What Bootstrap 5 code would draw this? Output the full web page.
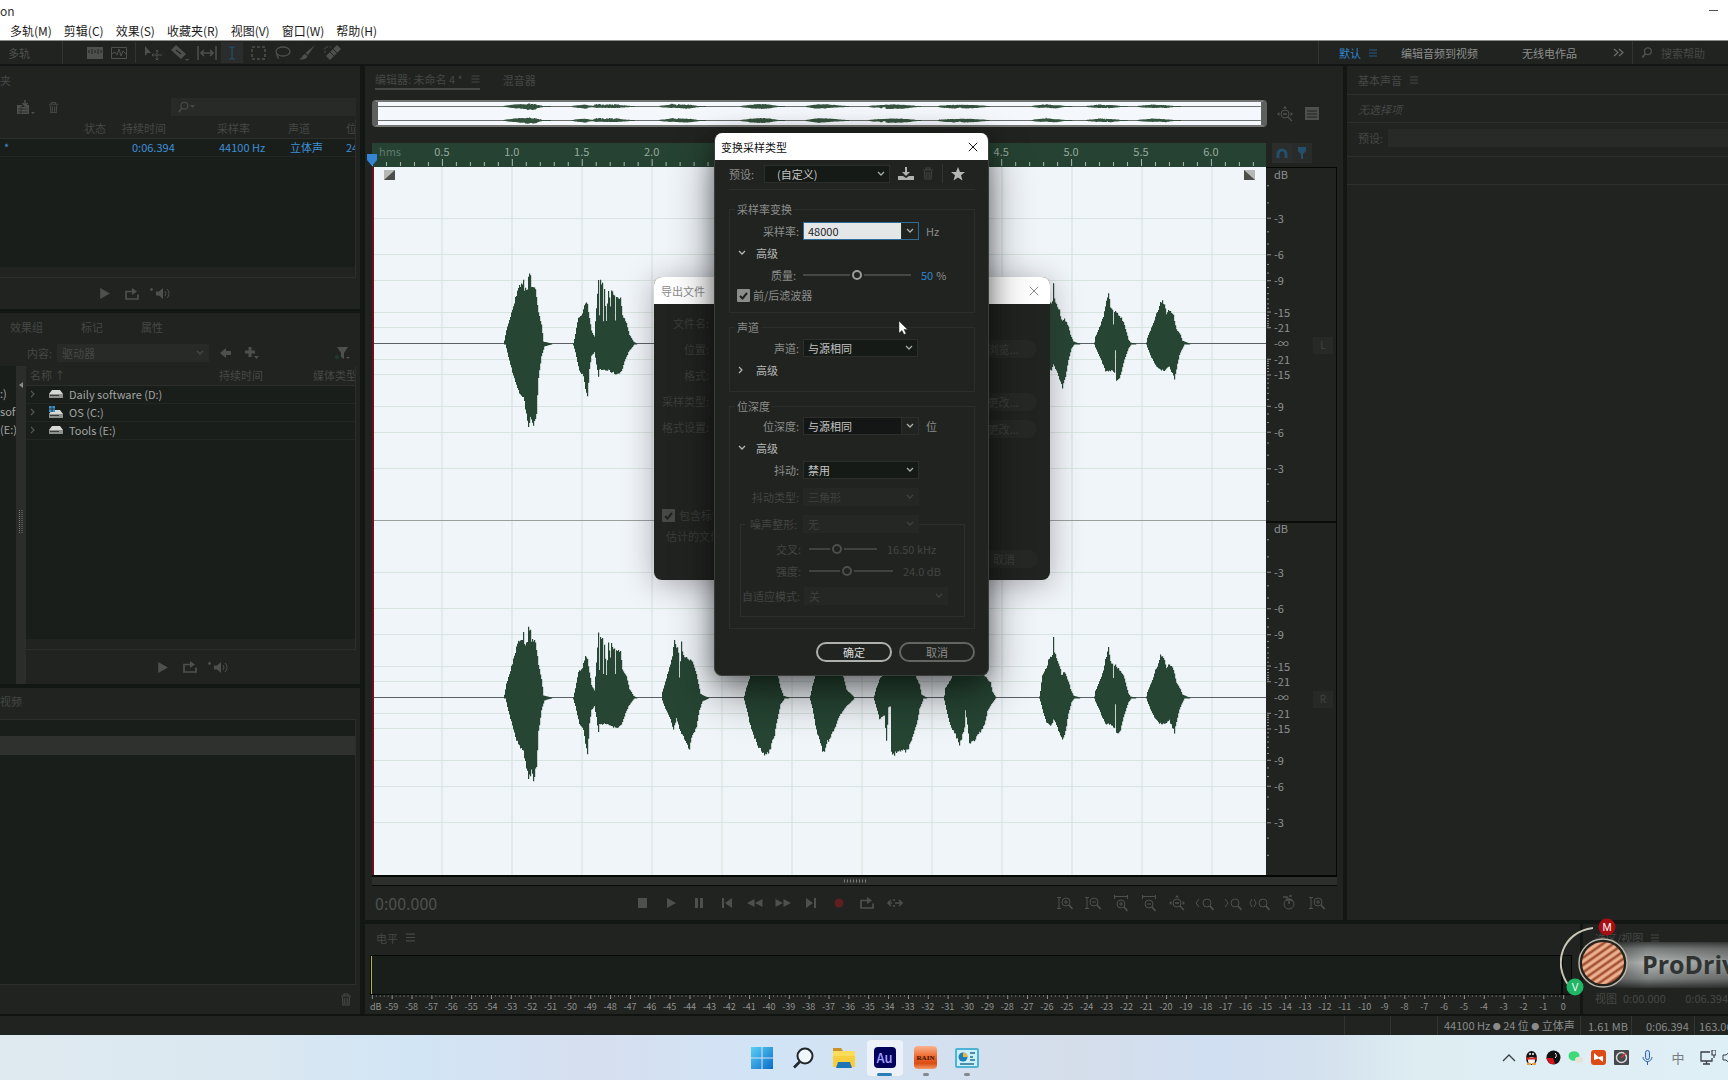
<!DOCTYPE html>
<html lang="zh-CN">
<head>
<meta charset="utf-8">
<meta name="viewport" content="width=device-width, initial-scale=1">
<title>Audition</title>
<link href="https://cdn.jsdelivr.net/npm/bootstrap@5.3.0/dist/css/bootstrap.min.css" rel="stylesheet">
<style>
:root{--panel:#212321;--well:#1a1e1b;--gap:#131714;--line:#2b2e2b;--dim:#454845;--ico:#4d504d;--blue:#3d8fd6}
body{font-family:"Noto Sans CJK SC","Noto Sans",sans-serif;font-size:11px;line-height:16px;color:var(--dim);background:var(--gap);height:100vh;overflow:hidden}
svg{display:block;flex:none}
.ib{border:0;background:none;padding:0;color:inherit;display:inline-flex;align-items:center;justify-content:center;flex:none;line-height:16px}
.titlebar{height:21px;background:#fff;color:#333;font-size:12px}
.menubar{height:20px;background:#fff;color:#111;font-size:12px;border-bottom:1px solid #8b8b8b;padding-left:10px;gap:12px}
.menubar .ib{color:#1b1b1b}
.toolbar-strip{height:25px;background:var(--panel);border-bottom:2px solid #121513;color:var(--ico)}
.vrule{width:1px;align-self:stretch;background:#323532;flex:none}
.panel{background:var(--panel);min-width:0}
.well{background:var(--well);border:1px solid var(--line);border-left:0;min-width:0}
.black-line{border:1px solid #060806}
.leftcol{width:360px;gap:4px}
.workarea{gap:4px;margin-left:5px;min-width:0}
.filespanel{height:243px}
.mediapanel{height:371px}
.fieldbox{background:#282a28;border:0;color:var(--dim);height:18px;font-size:11px;line-height:16px;padding:0 6px;border-radius:0}
.dtable{width:100%;table-layout:fixed;border-collapse:collapse;white-space:nowrap}
.dtable th,.dtable td{font-weight:400;padding:0 0 0 4px;overflow:hidden;height:18px;line-height:17px}
.dtable td{color:#a3a5a3;border-bottom:1px solid #232623}
.dtable .bluerow td{color:var(--blue)}
.dtable thead th{height:19px;border-bottom:1px solid var(--line)}
.chev{color:#555;margin-right:13px}
.drive{margin-right:6px}
.rows18{height:18px;line-height:17px;color:#a3a5a3}
.split{width:10px;background:#2a2d2a}
.strip{height:10px;background:var(--panel)}
.ctl{gap:14px}
.tab-active{border-bottom:2px solid #454845}
.overview{height:27px;border:2px solid #737673;border-left:6px solid #5d605d;border-right:6px solid #5d605d;border-radius:4px;background:#f4f7fb}
.ruler{height:24px;background:#264232}
.wave{background:#f0f5f9;border-left:2px solid #6d0f1c}
.sidecol{width:71px}
.dbcol{border-right:1px solid #060806}
.zoombar{height:11px;background:#2c2f2c;border-top:2px solid #050705;border-bottom:1px solid #090b09}
.transport{height:34px}
.transport .ib,.cell28{width:28px;height:24px}
.time-display{font-size:16px;width:270px}
.esspanel{width:381px}
.botrow{height:90px;gap:3px}
.selview{width:145px}
.statusbar{height:21px;background:var(--panel);border-top:2px solid #101310;color:#8a8c8a}
.dot8{font-size:8px}
.taskbar{height:45px;background:linear-gradient(90deg,#dfeaf0 0,#dbe8f1 14%,#d2e5f5 24%,#d6dff0 34%,#d1e4f6 45%,#d5ddea 62%,#d0dff2 70%,#d3e0ee 76%,#deedf2 82%,#dfeff6 100%)}
.task{width:36px;height:36px;border-radius:4px;position:relative}
.task.on{background:#edf2f9}
.task i{position:absolute;bottom:0;width:6px;height:3px;border-radius:2px;background:#84898f}
.task.on i{width:15px;background:#2c7fb5}
.orange-tile{font-family:"Liberation Serif",serif;font-weight:700;font-size:7px;color:#3a1206;width:23px;height:23px;border-radius:4px;background:linear-gradient(#f9b48f,#ef6a2e 45%,#d94c12 75%,#f49a68);display:flex;align-items:center;justify-content:center}
.au-tile{width:22px;height:21px;border-radius:4px;background:#00005b;color:#a6a0ff;font-size:13px;font-weight:500;display:flex;align-items:center;justify-content:center}
.tray .ib{color:#3a3f44}
/* dialogs */
.dlg{position:absolute;background:var(--panel);border-radius:8px;overflow:hidden}
.dlg-head{height:27px;background:#fff;font-size:11px}
.dlg-export{left:654px;top:277px;width:396px;height:303px;color:#3a3d3a;box-shadow:0 4px 30px rgba(40,30,40,.35)}
.dlg-export .dlg-head{color:#8b8b8b}
.dlg-export .lab{width:55px;height:26px;line-height:26px;text-align:right;white-space:nowrap}
.pill{border:0;border-radius:9px;height:18px;width:68px;background:#262826;color:#3d403d;padding:0;line-height:16px}
.dlg-conv{left:714px;top:133px;width:275px;color:#8b8d8b;border:1px solid #3a3d3a;border-top:0;box-shadow:0 18px 44px rgba(0,0,0,.48),0 2px 20px rgba(0,0,0,.3)}
.dlg-conv .dlg-head{color:#111;margin:0 -1px}
.preset{height:30px;padding-bottom:2px;border-bottom:1px solid #2c2f2c}
.grp{border:1px solid #2b2e2b;padding:0;margin:6px 0 0;min-width:0}
.grp>legend{float:none;width:auto;font-size:11px;line-height:16px;margin:0 0 0 5px;padding:0 2px}
.r22{height:22px}
.lab70{width:69px;text-align:right;white-space:nowrap;flex:none}
.unit{padding-left:7px}
.sel{appearance:none;width:116px;height:18px;border:1px solid #2b2e2b;border-radius:0;background:#161a17 url("data:image/svg+xml,%3Csvg xmlns='http://www.w3.org/2000/svg' viewBox='0 0 8 6'%3E%3Cpath d='M1 1l3 3 3-3' fill='none' stroke='%23a8aaa8' stroke-width='1.3'/%3E%3C/svg%3E") no-repeat right 4px center/8px 6px;color:#c3c5c3;font-size:11px;line-height:16px;padding:0 4px}
.sel:disabled{background-color:#252725;border-color:#252725;color:#3e413e;opacity:1;background-image:url("data:image/svg+xml,%3Csvg xmlns='http://www.w3.org/2000/svg' viewBox='0 0 8 6'%3E%3Cpath d='M1 1l3 3 3-3' fill='none' stroke='%233f423f' stroke-width='1.3'/%3E%3C/svg%3E")}
.sel.quiet{background-color:#282a28;border-color:#282a28;color:var(--dim);background-image:url("data:image/svg+xml,%3Csvg xmlns='http://www.w3.org/2000/svg' viewBox='0 0 8 6'%3E%3Cpath d='M1 1l3 3 3-3' fill='none' stroke='%23454845' stroke-width='1.3'/%3E%3C/svg%3E")}
.sel.w126{width:126px;padding-left:12px}
.combo{width:116px;height:18px;border:1px solid #2b2e2b;display:flex}
.combo input{width:97px;flex:none;border:0;border-radius:0;background:#131614;color:#c3c5c3;font-size:11px;line-height:16px;padding:0 4px;outline:0}
.combo .ib{flex:1;border-left:1px solid #2b2e2b;color:#b0b2b0}
.combo.focus{border-color:#2d6b98}
.combo.focus input{background:#e4e7e8;color:#222}
.rng{appearance:none;height:12px;background:none;margin:0;padding:0}
.rng::-webkit-slider-runnable-track{height:2px;background:#444744}
.rng::-webkit-slider-thumb{appearance:none;width:10px;height:10px;margin-top:-4px;border-radius:50%;border:2px solid #9b9d9b;background:var(--panel);box-shadow:0 0 0 2px var(--panel)}
.rng:disabled::-webkit-slider-runnable-track{background:#3f423f}
.rng:disabled::-webkit-slider-thumb{border-color:#4b4e4b}
.off{color:#424542}
.ck{appearance:none;width:13px;height:13px;margin:0;border-radius:1px;background:#8b8d8b url("data:image/svg+xml,%3Csvg xmlns='http://www.w3.org/2000/svg' viewBox='0 0 13 13'%3E%3Cpath d='M3 7l2.5 2.5L10 4' fill='none' stroke='%23202220' stroke-width='2'/%3E%3C/svg%3E") center/13px 13px;flex:none}
.dlg-export .ck{background-color:#464946}
.okbtn{width:76px;height:20px;border-radius:10px;border:2px solid #aeb0ae;background:none;color:#d8dad8;padding:0;line-height:15px}
.okbtn.sec{border-color:#626562;color:#8b8d8b}
.cursor{position:absolute;left:898px;top:321px}
.drivebadge{position:absolute;right:0;top:914px}
.playhead{position:absolute;left:-6px;top:11px}
.fade-l{position:absolute;left:10px;top:3px}
.fade-r{position:absolute;right:11px;top:3px}
.chan{position:absolute;right:3px;width:20px;height:17px;background:#272927;color:#3f423f;text-align:center;font-size:10px}
</style>
<script src="https://cdn.jsdelivr.net/npm/bootstrap@5.3.0/dist/js/bootstrap.bundle.min.js"></script>
</head>
<body class="d-flex flex-column position-relative">

<svg width="0" height="0" class="position-absolute" aria-hidden="true">
  <symbol id="i-menu" viewBox="0 0 8 8"><path d="M0 1h8M0 4h8M0 7h8" stroke="currentColor"/></symbol>
  <symbol id="i-play" viewBox="0 0 12 12"><path d="M2 1l9 5-9 5z" fill="currentColor"/></symbol>
  <symbol id="i-loop" viewBox="0 0 14 12"><path d="M4 3.500H1V11h12V6.500M4 3.500h4" fill="none" stroke="currentColor" stroke-width="1.700"/><path d="M7 0l5 3.500-5 3.500z" fill="currentColor"/></symbol>
  <symbol id="i-spk" viewBox="0 0 20 13"><circle cx="1.500" cy="2.500" r="1.400" fill="currentColor"/><path d="M6 4.500h3L13 1v11l-4-3.500H6z" fill="currentColor"/><path d="M15 4a4 4 0 0 1 0 5M17 2a6 6 0 0 1 0 9" fill="none" stroke="currentColor"/></symbol>
  <symbol id="i-trash" viewBox="0 0 12 13"><path d="M1 3h10M4 3V1h4v2M2.500 4l.5 8h6l.5-8M4.800 5v6M7.200 5v6" fill="none" stroke="currentColor" stroke-width="1.200"/></symbol>
  <symbol id="i-lens" viewBox="0 0 14 14"><circle cx="8" cy="5.500" r="4" fill="none" stroke="currentColor" stroke-width="1.500"/><path d="M5 8.500L1.500 13" stroke="currentColor" stroke-width="2"/></symbol>
  <symbol id="i-x" viewBox="0 0 12 12"><path d="M1 1l10 10M11 1L1 11" stroke="currentColor" stroke-width="1.200"/></symbol>
  <symbol id="i-dn" viewBox="0 0 8 6"><path d="M1 1l3 3 3-3" fill="none" stroke="currentColor" stroke-width="1.300"/></symbol>
  <symbol id="i-rt" viewBox="0 0 6 8"><path d="M1 1l3 3-3 3" fill="none" stroke="currentColor" stroke-width="1.200"/></symbol>
  <symbol id="i-disk" viewBox="0 0 14 9"><path d="M3 0h8l3 4H0z" fill="#d5d8d5"/><path d="M0 4h14v4H0z" fill="#8d908d"/><path d="M1 5.500h9" stroke="#3b3e3b"/></symbol>
  <symbol id="i-zin" viewBox="0 0 16 16"><circle cx="9" cy="7" r="4" fill="none" stroke="currentColor"/><path d="M12 10l3.500 4" stroke="currentColor" stroke-width="1.600"/><path d="M7 7h4M9 5v4" stroke="currentColor"/></symbol>
  <symbol id="i-zout" viewBox="0 0 16 16"><circle cx="9" cy="7" r="4" fill="none" stroke="currentColor"/><path d="M12 10l3.500 4" stroke="currentColor" stroke-width="1.600"/><path d="M7 7h4" stroke="currentColor"/></symbol>
  <symbol id="i-zoom" viewBox="0 0 16 16"><circle cx="9" cy="7" r="4" fill="none" stroke="currentColor"/><path d="M12 10l3.500 4" stroke="currentColor" stroke-width="1.600"/></symbol>
  <symbol id="i-vbar" viewBox="0 0 16 16"><path d="M2 2v12M0 2.500h4M0 13.500h4" stroke="currentColor"/></symbol>
  <symbol id="i-hbar" viewBox="0 0 16 16"><path d="M1 1.500h14M1.500 0v4M14.500 0v4" stroke="currentColor"/></symbol>
  <symbol id="i-full" viewBox="0 0 16 16"><circle cx="8" cy="8" r="4" fill="none" stroke="currentColor"/><path d="M6 8h4M11 11l4 4" stroke="currentColor" stroke-width="1.400"/><path d="M8 0l2 2.500H6zM0 8l2.500-2v4zM16 8l-2.500-2v4z" fill="currentColor"/></symbol>
</svg>

<header>
  <div class="titlebar d-flex align-items-center justify-content-between"><span>on</span><button class="ib me-2" aria-label="最小化"><svg width="13" height="4"><path d="M2 1.500h9" stroke="#555"/></svg></button></div>
  <nav class="menubar d-flex align-items-center" aria-label="菜单">
    <button class="ib">多轨(M)</button><button class="ib">剪辑(C)</button><button class="ib">效果(S)</button><button class="ib">收藏夹(R)</button><button class="ib">视图(V)</button><button class="ib">窗口(W)</button><button class="ib">帮助(H)</button>
  </nav>
  <div class="toolbar-strip d-flex align-items-center">
    <button class="ib px-2">多轨</button>
    <span class="vrule ms-4 me-4"></span>
    <div class="d-flex align-items-center">
      <button class="ib me-2" aria-label="频谱"><svg width="16" height="12"><path d="M0 0h16v12H0z" fill="currentColor"/><path d="M2 3v3M5 2v5M8 3v3M11 2v5M14 3v3" stroke="#212321"/></svg></button>
      <button class="ib me-2" aria-label="波形"><svg width="16" height="12"><path d="M.5.5h15v11H.5z" fill="none" stroke="currentColor"/><path d="M1 7l3-2 2 3 2-6 2 7 2-5 3 3" fill="none" stroke="currentColor"/></svg></button>
      <span class="vrule me-2"></span>
      <button class="ib me-2" aria-label="移动"><svg width="18" height="14"><path d="M1 0l6 7H3.500L1 10z" fill="currentColor"/><path d="M13 4v10M8 9h10M11.500 5.500L13 4l1.500 1.500M11.500 12.500L13 14l1.500-1.500M9.500 7.500L8 9l1.500 1.500" fill="none" stroke="currentColor"/></svg></button>
      <button class="ib me-2" aria-label="剃刀"><svg width="19" height="16"><path d="M1 5l5-5 10 9-5 5z" fill="currentColor"/><path d="M6 5l5 4" stroke="#212321" stroke-width="1.500"/><path d="M15 14h4l-2 2z" fill="currentColor"/></svg></button>
      <button class="ib me-1" aria-label="时间选择"><svg width="20" height="14"><path d="M1 0v14M19 0v14M4 7h12M7 4L4 7l3 3M13 4l3 3-3 3" fill="none" stroke="currentColor" stroke-width="1.500"/></svg></button>
      <button class="ib me-2" aria-label="选择" style="width:22px;height:21px;background:#2a2d2c;color:#22506a"><svg width="8" height="14"><path d="M1 1h2l1 1 1-1h2M4 2v10M1 13h2l1-1 1 1h2" fill="none" stroke="currentColor" stroke-width="1.200"/></svg></button>
      <button class="ib me-2" aria-label="框选"><svg width="15" height="14"><path d="M1 1h13v12H1z" fill="none" stroke="currentColor" stroke-width="1.500" stroke-dasharray="3 2"/></svg></button>
      <button class="ib me-2" aria-label="套索"><svg width="17" height="14"><ellipse cx="9" cy="5.500" rx="7" ry="4.500" fill="none" stroke="currentColor" stroke-width="1.300"/><path d="M3 8c-1 2 2 2 1 5" fill="none" stroke="currentColor" stroke-width="1.300"/></svg></button>
      <button class="ib me-2" aria-label="画笔"><svg width="17" height="15"><path d="M16 0L9 10 6.500 8zM6 9l2.500 2C7 15 3 15 0 14c3 0 3-4 6-5z" fill="currentColor"/></svg></button>
      <button class="ib" aria-label="修复"><svg width="18" height="15"><path d="M2 11L13 0l4 4L6 15z" fill="currentColor"/><path d="M6 7l4 4M9 4l4 4" stroke="#212321"/><path d="M1 8V2h6" fill="none" stroke="currentColor" stroke-dasharray="2 1.500"/></svg></button>
    </div>
    <div class="d-flex align-items-center ms-auto align-self-stretch" style="width:410px">
      <span class="vrule me-3"></span>
      <button class="ib ms-1" style="color:#2f86d0">默认</button>
      <svg class="ms-2 me-3" width="8" height="8" style="color:#255a80"><use href="#i-menu"/></svg>
      <button class="ib ms-2" style="color:#8d8f8d">编辑音频到视频</button>
      <button class="ib mx-auto ps-2" style="color:#8d8f8d">无线电作品</button>
      <svg class="me-2" width="11" height="9"><path d="M1 1l4 3.500-4 3.500M6 1l4 3.500-4 3.500" fill="none" stroke="#6b6e6b" stroke-width="1.200"/></svg>
      <span class="vrule"></span>
      <label class="d-flex align-items-center ps-2 gap-2" style="width:95px"><svg width="12" height="13"><use href="#i-lens"/></svg><input class="fieldbox w-75 p-0" style="background:none" value="搜索帮助" aria-label="搜索帮助"></label>
    </div>
  </div>
</header>

<main class="d-flex flex-fill" style="min-height:0">
  <div class="leftcol d-flex flex-column flex-shrink-0">
    <section class="panel filespanel d-flex flex-column">
      <div class="pt-1" style="height:29px;line-height:20px">夹</div>
      <div class="d-flex align-items-center pe-1" style="height:24px;padding-left:16px">
        <button class="ib" style="margin-right:13px;color:var(--ico)" aria-label="导入"><svg width="19" height="15"><path d="M1 5h5v2h4V5h3v9H1z" fill="currentColor"/><path d="M2 9h10M2 12h10M5 6v8" stroke="#212321" stroke-width=".700"/><path d="M9 0v5M6.500 3L9 6l2.500-3" stroke="currentColor" stroke-width="1.500" fill="none"/><path d="M15 12h4l-2 2z" fill="currentColor"/></svg></button>
        <button class="ib" aria-label="删除"><svg width="11" height="13"><use href="#i-trash"/></svg></button>
        <label class="fieldbox ms-auto d-flex align-items-center" style="width:185px"><svg width="13" height="12"><use href="#i-lens"/></svg><svg width="5" height="4"><path d="M0 0h5L2.500 3z" fill="currentColor"/></svg><input class="fieldbox w-75" style="background:none" aria-label="搜索文件"></label>
      </div>
      <div class="flex-fill well d-flex flex-column justify-content-between me-1" style="border-top:0">
        <table class="dtable">
          <colgroup><col style="width:80px"><col style="width:38px"><col style="width:95px"><col style="width:71px"><col style="width:58px"><col></colgroup>
          <thead class="panel"><tr><th></th><th>状态</th><th>持续时间</th><th>采样率</th><th>声道</th><th>位</th></tr></thead>
          <tbody><tr class="bluerow"><td>*</td><td></td><td style="padding-left:14px">0:06.394</td><td style="padding-left:6px">44100 Hz</td><td style="padding-left:6px">立体声</td><td>24</td></tr></tbody>
        </table>
        <div class="strip"></div>
      </div>
      <div class="d-flex align-items-center ctl" style="height:31px;padding-left:98px;color:var(--ico)">
        <button class="ib" aria-label="播放"><svg width="13" height="13"><use href="#i-play"/></svg></button>
        <button class="ib" aria-label="循环"><svg width="14" height="12"><use href="#i-loop"/></svg></button>
        <button class="ib" aria-label="自动播放" style="margin-left:-3px"><svg width="20" height="13"><use href="#i-spk"/></svg></button>
      </div>
    </section>

    <section class="panel mediapanel d-flex flex-column">
      <div class="d-flex align-items-center" style="height:27px;padding-left:10px;gap:38px"><button class="ib">效果组</button><button class="ib">标记</button><button class="ib">属性</button></div>
      <div class="d-flex align-items-center" style="height:26px;padding-left:27px">
        <label for="content" style="width:30px">内容:</label>
        <select id="content" class="sel quiet" style="width:152px"><option>驱动器</option></select>
        <button class="ib ms-2" style="padding-left:3px;color:var(--ico)" aria-label="后退"><svg width="12" height="10"><path d="M0 5l6-5v3h5v4H6v3z" fill="currentColor"/></svg></button>
        <button class="ib ms-2" style="padding-left:5px;color:var(--ico)" aria-label="添加"><svg width="14" height="12"><path d="M5 0v10M0 5h10" stroke="currentColor" stroke-width="3"/><path d="M9 9h5l-2.500 3z" fill="currentColor"/></svg></button>
        <button class="ib ms-auto me-2" style="padding-right:2px;color:var(--ico)" aria-label="筛选"><svg width="15" height="13"><path d="M2 0h11L9 6v6L6 10V6z" fill="currentColor"/><path d="M11 10h4l-2 2z" fill="currentColor"/><circle cx="2" cy="10" r="2" fill="#1f3b2b"/></svg></button>
      </div>
      <div class="d-flex flex-fill">
        <div class="d-flex flex-column overflow-hidden flex-shrink-0" style="width:16px;background:var(--well);padding-top:19px">
          <div class="rows18">:)</div><div class="rows18">soft</div><div class="rows18" style="white-space:nowrap">(E:)</div>
        </div>
        <div class="split d-flex flex-column align-items-center flex-shrink-0"><svg class="mt-3" width="4" height="6"><path d="M4 0v6L0 3z" fill="#8a8c8a"/></svg><svg width="4" height="24" style="margin-top:122px"><path d="M.5 0v24M3 0v24" stroke="#777a77" stroke-dasharray="1 1"/></svg></div>
        <div class="flex-fill d-flex flex-column" style="min-width:0">
          <div class="well flex-fill d-flex flex-column justify-content-between" style="margin-right:4px;border-top:0">
            <table class="dtable">
              <colgroup><col style="width:189px"><col style="width:94px"><col></colgroup>
              <thead class="panel"><tr><th>名称 ↑</th><th>持续时间</th><th>媒体类型</th></tr></thead>
              <tbody>
                <tr><td colspan="3"><span class="d-flex align-items-center"><svg width="6" height="8" class="chev"><use href="#i-rt"/></svg><svg width="14" height="9" class="drive"><use href="#i-disk"/></svg>Daily software (D:)</span></td></tr>
                <tr><td colspan="3"><span class="d-flex align-items-center"><svg width="6" height="8" class="chev"><use href="#i-rt"/></svg><svg width="14" height="13" class="drive"><use href="#i-disk" y="4" height="9"/><path d="M0 0h6v6H0z" fill="#3b90cc"/><path d="M3 0v6M0 3h6" stroke="#1a1e1b" stroke-width=".700"/></svg>OS (C:)</span></td></tr>
                <tr><td colspan="3"><span class="d-flex align-items-center"><svg width="6" height="8" class="chev"><use href="#i-rt"/></svg><svg width="14" height="9" class="drive"><use href="#i-disk"/></svg>Tools (E:)</span></td></tr>
              </tbody>
            </table>
            <div class="strip"></div>
          </div>
          <div class="d-flex align-items-center ctl" style="height:34px;padding-left:130px;color:var(--ico)">
            <button class="ib" aria-label="播放"><svg width="13" height="13"><use href="#i-play"/></svg></button>
            <button class="ib" aria-label="循环"><svg width="14" height="12"><use href="#i-loop"/></svg></button>
            <button class="ib" aria-label="自动播放" style="margin-left:-3px"><svg width="20" height="13"><use href="#i-spk"/></svg></button>
          </div>
        </div>
      </div>
    </section>

    <section class="panel flex-fill d-flex flex-column">
      <div style="height:31px;line-height:26px">视频</div>
      <div class="well flex-fill me-1" style="padding-top:16px"><div style="height:19px;background:#2f312e"></div></div>
      <div class="d-flex align-items-center justify-content-end pe-2" style="height:29px"><button class="ib" aria-label="删除"><svg width="12" height="13"><use href="#i-trash"/></svg></button></div>
    </section>
  </div>

  <div class="workarea d-flex flex-column flex-fill">
    <div class="d-flex flex-fill" style="gap:4px;min-height:0">
      <section class="panel flex-fill d-flex flex-column" style="padding:0 6px 0 7px">
        <div class="d-flex align-items-start" style="height:34px;padding:4px 0 0 3px;gap:23px">
          <button class="ib tab-active" style="height:20px">编辑器: 未命名 4 *<svg class="ms-2" width="9" height="8"><use href="#i-menu"/></svg></button>
          <button class="ib" style="height:20px">混音器</button>
        </div>
        <div class="d-flex">
          <div class="overview flex-fill"><svg id="ov" width="100%" height="23" viewBox="0 0 894 23" preserveAspectRatio="none"></svg></div>
          <div class="sidecol d-flex align-items-center" style="padding-left:10px;gap:12px;color:var(--ico)"><button class="ib" aria-label="全部缩小"><svg width="16" height="16"><use href="#i-full"/></svg></button><button class="ib" aria-label="列表"><svg width="14" height="13"><path d="M0 0h14v13H0z" fill="currentColor"/><path d="M2 4h10M2 7h10M2 10h10" stroke="#212321"/></svg></button></div>
        </div>
        <div class="d-flex" style="margin-top:16px">
          <div class="ruler flex-fill position-relative"><svg id="ruler" width="100%" height="24"></svg><svg class="playhead" width="12" height="13"><path d="M1 0h10v6L6 12 1 6z" fill="#3585d5"/></svg></div>
          <div class="sidecol d-flex pb-1" style="padding-left:6px"><button class="ib" style="width:20px;background:#2b2e2d;color:#25506c" aria-label="吸附"><svg width="12" height="11"><path d="M2 10V6a4 4 0 0 1 8 0v4" fill="none" stroke="currentColor" stroke-width="3"/></svg></button><button class="ib" style="width:20px;background:#292b2a;color:#25506c" aria-label="标记"><svg width="10" height="12"><path d="M1 0h8v4L6 7v5H4V7L1 4z" fill="currentColor"/></svg></button></div>
        </div>
        <div class="d-flex flex-fill" style="min-height:0">
          <div class="wave flex-fill position-relative"><svg id="wave" width="100%" height="100%" viewBox="0 0 892 708" preserveAspectRatio="none"></svg>
            <svg class="fade-l" width="11" height="10"><path d="M0 0h11v10H0z" fill="#b5b8b5"/><path d="M11 0v10H0z" fill="#4b4e4b"/></svg>
            <svg class="fade-r" width="11" height="10"><path d="M0 0h11v10H0z" fill="#b5b8b5"/><path d="M0 0v10h11z" fill="#4b4e4b"/></svg>
          </div>
          <div class="sidecol dbcol position-relative"><svg id="db" width="100%" height="100%"></svg><span class="chan" style="top:24%">L</span><span class="chan" style="top:74%">R</span></div>
        </div>
        <div class="zoombar d-flex align-items-center justify-content-center"><svg width="22" height="4"><path d="M0 2h22" stroke="#7b7e7b" stroke-width="3" stroke-dasharray="1 2"/></svg></div>
        <div class="transport d-flex align-items-center" style="color:var(--ico)">
          <div class="time-display" style="padding-left:3px">0:00.000</div><div class="flex-fill"><div class="d-flex" id="tp" style="margin-left:-13px"></div></div><div class="d-flex" id="zb" style="margin-right:6px"></div>
        </div>
      </section>
      <section class="panel esspanel flex-shrink-0">
        <div class="d-flex align-items-center" style="height:29px;padding-left:11px;border-bottom:1px solid #2c2f2c">基本声音<svg class="ms-2" width="8" height="8"><use href="#i-menu"/></svg></div>
        <div class="fst-italic" style="height:28px;line-height:28px;padding-left:11px;border-bottom:1px solid #2c2f2c">无选择项</div>
        <div class="d-flex align-items-center" style="height:34px;padding:0 0 4px 11px;border-bottom:1px solid #2c2f2c"><label for="ps0" style="width:30px">预设:</label><input id="ps0" class="fieldbox flex-fill"></div>
        <div style="height:28px;border-bottom:1px solid #2c2f2c"></div>
      </section>
    </div>
    <div class="botrow d-flex flex-shrink-0">
      <section class="panel flex-fill d-flex flex-column" style="padding-left:5px">
        <div class="d-flex align-items-center" style="height:31px;padding:0 0 4px 6px">电平<svg class="ms-2" width="9" height="9"><use href="#i-menu"/></svg></div>
        <div class="d-flex"><div class="flex-fill black-line" style="height:40px;background:var(--well)"><div style="width:1px;height:38px;background:#b5b52a"></div></div><div class="black-line me-2" style="width:10px;background:var(--well)"></div></div>
        <svg id="lv" width="100%" height="19"></svg>
      </section>
      <section class="panel selview flex-shrink-0 overflow-hidden" style="padding-left:12px;white-space:nowrap">
        <div class="d-flex align-items-center" style="height:28px">选区/视图<svg class="ms-2" width="8" height="8"><use href="#i-menu"/></svg></div>
        <div style="height:38px"></div>
        <div class="d-flex" style="gap:6px"><span>视图</span><span style="width:60px">0:00.000</span><span>0:06.394</span></div>
      </section>
    </div>
  </div>
</main>

<footer class="statusbar d-flex justify-content-end align-items-center overflow-hidden flex-shrink-0" style="white-space:nowrap">
  <span class="vrule" style="margin-right:45px"></span><span class="vrule" style="margin-right:46px"></span><span class="vrule" style="margin-right:6px"></span>
  <span style="width:136px">44100 Hz <span class="dot8">●</span> 24 位 <span class="dot8">●</span> 立体声</span><span class="vrule" style="margin-right:7px"></span><span style="width:43px">1.61 MB</span><span class="vrule" style="margin-right:14px"></span><span style="width:48px">0:06.394</span><span class="vrule" style="margin-right:4px"></span><span style="width:29px">163.06 GB 空闲</span>
</footer>

<div class="taskbar position-relative d-flex align-items-center justify-content-center flex-shrink-0">
  <div class="d-flex" style="gap:5px">
    <button class="ib task" aria-label="开始"><svg width="22" height="22"><defs><linearGradient id="wg" x2="1" y2="1"><stop stop-color="#5cd0f5"/><stop offset="1" stop-color="#0a6cc8"/></linearGradient></defs><path d="M0 0h10.500v10.500H0zM11.500 0H22v10.500H11.500zM0 11.500h10.500V22H0zM11.500 11.500H22V22H11.500z" fill="url(#wg)"/></svg></button>
    <button class="ib task" aria-label="搜索"><svg width="22" height="22"><circle cx="13" cy="9" r="7.500" fill="#f1f6fb" stroke="#22272c" stroke-width="2"/><path d="M7.500 15L2 20.500" stroke="#22272c" stroke-width="2.600"/></svg></button>
    <button class="ib task" aria-label="文件夹"><svg width="24" height="22"><path d="M1 1h8l2 3H1z" fill="#c9932a"/><path d="M1 4h22v16H1z" fill="#f7cf3d"/><path d="M1 4h22v5H1z" fill="#fbdc5b"/><path d="M6 15h12l2 6H4z" fill="#1d75b8"/></svg></button>
    <button class="ib task on" aria-label="Audition"><span class="au-tile">Au</span><i></i></button>
    <button class="ib task" aria-label="RAIN"><span class="orange-tile">RAIN</span><i></i></button>
    <button class="ib task" aria-label="控制面板"><svg width="24" height="20"><rect width="24" height="20" rx="2" fill="#4fb3d6"/><rect x="2" y="2" width="20" height="16" fill="#c9f0fa"/><circle cx="8" cy="9" r="4.500" fill="#1e7eb5"/><path d="M8 9V4.500A4.500 4.500 0 0 1 12.500 9z" fill="#e9b83c"/><path d="M15 5h5M15 9h3M15 12h5M5 16h14" stroke="#256f8f" stroke-width="1.500"/></svg><i></i></button>
  </div>
  <div class="tray position-absolute end-0 top-0 h-100 d-flex align-items-center overflow-hidden" style="width:230px">
    <button class="ib" style="width:22px" aria-label="更多"><svg width="14" height="8"><path d="M1 7l6-6 6 6" fill="none" stroke="currentColor" stroke-width="1.300"/></svg></button>
    <button class="ib" style="width:22px" aria-label="QQ"><svg width="13" height="15"><ellipse cx="6.500" cy="8" rx="5.500" ry="7" fill="#141414"/><ellipse cx="6.500" cy="10.500" rx="3.500" ry="3.500" fill="#f2f2f2"/><path d="M1 7.500h11v2H1z" fill="#d8262b"/><path d="M2 13h4v2H2zM7 13h4v2H7z" fill="#e7a33a"/><circle cx="5" cy="4" r="1" fill="#fff"/><circle cx="8" cy="4" r="1" fill="#fff"/></svg></button>
    <button class="ib" style="width:22px" aria-label="OBS"><svg width="15" height="15"><circle cx="7.500" cy="7.500" r="7" fill="#111"/><path d="M0 8h7l2 6H4z" fill="#d3141c"/><path d="M9 3a3 3 0 0 1 0 5" stroke="#eee" fill="none"/></svg></button>
    <button class="ib" style="width:23px" aria-label="微信"><svg width="15" height="13"><ellipse cx="6" cy="5" rx="5.500" ry="4.800" fill="#3ed97a"/><ellipse cx="11" cy="9" rx="4" ry="3.300" fill="#e6e2da"/></svg></button>
    <button class="ib" style="width:23px" aria-label="播放器"><svg width="15" height="15"><rect width="15" height="15" rx="3" fill="#dc4b16"/><path d="M3 3l4.500 4L12 6v6L7.500 8.500 3 10z" fill="#fff"/></svg></button>
    <button class="ib" style="width:22px" aria-label="仪表"><svg width="15" height="15"><rect width="15" height="15" rx="1" fill="#46484c"/><circle cx="7.500" cy="7.500" r="5" fill="none" stroke="#d6d8da" stroke-width="1.500"/><path d="M7 8l5-5" stroke="#d33" stroke-width="1.500"/></svg></button>
    <button class="ib" style="width:31px" aria-label="麦克风"><svg width="11" height="15"><rect x="3.500" y=".5" width="4" height="9" rx="2" fill="#cfe0f5" stroke="#2d62a8"/><path d="M1 7a4.500 4.500 0 0 0 9 0M5.500 11.500V15" fill="none" stroke="#2d62a8"/></svg></button>
    <button class="ib" style="width:30px;font-size:13px;color:#777c80">中</button>
    <button class="ib" style="width:29px" aria-label="网络"><svg width="16" height="15"><path d="M10 2H1v9h11V8M6.500 11v3M3 14h7" fill="none" stroke="currentColor" stroke-width="1.300"/><path d="M12 0h4v5h-4zM14 5v3" fill="none" stroke="currentColor" stroke-width="1.200"/></svg></button>
    <button class="ib" aria-label="音量"><svg width="14" height="13"><path d="M1 4h3l4-3.500v12L4 9H1z" fill="none" stroke="currentColor"/></svg></button>
  </div>
</div>

<section class="dlg dlg-export" aria-label="导出文件">
  <div class="dlg-head d-flex align-items-center justify-content-between" style="padding:0 11px 0 7px">导出文件<button class="ib" aria-label="关闭"><svg width="10" height="10"><use href="#i-x"/></svg></button></div>
  <div class="d-flex justify-content-between" style="padding-top:6px">
    <div><div class="lab">文件名:</div><div class="lab">位置:</div><div class="lab">格式:</div><div class="lab">采样类型:</div><div class="lab">格式设置:</div></div>
    <div class="d-flex flex-column" style="padding:30px 13px 0 0;gap:9px"><button class="pill">浏览...</button><button class="pill" style="margin-top:26px">更改...</button><button class="pill">更改...</button></div>
  </div>
  <div class="d-flex align-items-center" style="padding:67px 0 0 8px;gap:4px"><input type="checkbox" class="ck" id="mk" checked><label for="mk">包含标记和其他元数据</label></div>
  <div style="padding:5px 0 0 12px">估计的文件大小:</div>
  <div class="d-flex justify-content-end" style="padding:6px 12px 0 0"><button class="pill">取消</button></div>
</section>

<section class="dlg dlg-conv" role="dialog" aria-label="变换采样类型">
  <div class="dlg-head d-flex align-items-center justify-content-between" style="padding:0 11px 0 7px">变换采样类型<button class="ib" aria-label="关闭"><svg width="10" height="10"><use href="#i-x"/></svg></button></div>
  <div style="padding:0 13px 13px 14px">
    <div class="preset d-flex align-items-center">
      <label for="ps" style="width:35px">预设:</label><select id="ps" class="sel w126"><option>(自定义)</option></select>
      <button class="ib ms-2" style="color:#b0b2b0" aria-label="保存预设"><svg width="16" height="13"><path d="M7 0h2v5h3L8 9 4 5h3zM0 9h5l3 2 3-2h5v4H0z" fill="currentColor"/></svg></button>
      <button class="ib ms-2" style="color:#3f423f" aria-label="删除预设"><svg width="12" height="13"><use href="#i-trash"/></svg></button>
      <span class="vrule my-1 ms-2 me-2"></span>
      <button class="ib" style="color:#b5b7b5" aria-label="收藏"><svg width="14" height="14"><path d="M7 0l2 5h5l-4 3.300 1.500 5.200L7 10.500l-4.500 3L4 8.300 0 5h5z" fill="currentColor"/></svg></button>
    </div>
    <fieldset class="grp" style="padding:3px 0 4px;margin-top:11px"><legend>采样率变换</legend>
      <div class="r22 d-flex align-items-center"><label class="lab70 me-1" for="sr">采样率:</label><div class="combo focus"><input id="sr" value="48000"><button class="ib" aria-label="展开"><svg width="8" height="6"><use href="#i-dn"/></svg></button></div><span class="unit">Hz</span></div>
      <div class="r22 d-flex align-items-center" style="color:#b5b7b5;padding-left:8px;gap:10px"><svg width="8" height="6"><use href="#i-dn"/></svg>高级</div>
      <div class="r22 d-flex align-items-center"><label class="lab70 me-1" for="ql" style="width:66px">质量:</label><input id="ql" type="range" class="rng" style="width:108px;margin-left:3px" value="50"><span style="margin-left:10px;color:#2f86d0">50</span><span style="padding-left:3px">%</span></div>
      <div class="r22 d-flex align-items-center" style="padding:0 0 4px 7px;gap:3px"><input type="checkbox" class="ck" id="fl" checked><label for="fl">前/后滤波器</label></div>
    </fieldset>
    <fieldset class="grp" style="padding:2px 0 10px"><legend>声道</legend>
      <div class="r22 d-flex align-items-center"><label class="lab70 me-1" for="ch">声道:</label><select id="ch" class="sel" style="width:115px"><option>与源相同</option></select></div>
      <div class="r22 d-flex align-items-center" style="color:#b5b7b5;padding-left:8px;gap:12px"><svg width="6" height="8"><use href="#i-rt"/></svg>高级</div>
    </fieldset>
    <fieldset class="grp" style="padding:1px 0 11px"><legend>位深度</legend>
      <div class="r22 d-flex align-items-center"><label class="lab70 me-1" for="bd">位深度:</label><div class="combo"><input id="bd" value="与源相同"><button class="ib" aria-label="展开"><svg width="8" height="6"><use href="#i-dn"/></svg></button></div><span class="unit">位</span></div>
      <div class="r22 d-flex align-items-center" style="color:#b5b7b5;padding-left:8px;gap:10px"><svg width="8" height="6"><use href="#i-dn"/></svg>高级</div>
      <div class="r22 d-flex align-items-center"><label class="lab70 me-1" for="dt">抖动:</label><select id="dt" class="sel"><option>禁用</option></select></div>
      <div class="r22 d-flex align-items-center off" style="margin-top:5px"><label class="lab70 me-1" for="dy">抖动类型:</label><select id="dy" class="sel" disabled><option>三角形</option></select></div>
      <fieldset class="grp off" style="margin:5px 9px 0 10px;padding-bottom:9px">
        <legend class="d-flex align-items-center r22 p-0"><label class="me-1 ps-1" for="ns" style="width:53px">噪声整形:</label><select id="ns" class="sel" disabled><option>无</option></select></legend>
        <div class="r22 d-flex align-items-center" style="margin-top:3px"><label class="lab70" style="width:60px" for="cx">交叉:</label><input id="cx" type="range" class="rng" style="width:68px;margin-left:8px" value="39" disabled><span style="margin-left:10px">16.50 kHz</span></div>
        <div class="r22 d-flex align-items-center"><label class="lab70" style="width:60px" for="st">强度:</label><input id="st" type="range" class="rng" style="width:84px;margin-left:8px" value="45" disabled><span style="margin-left:10px">24.0 dB</span></div>
        <div class="r22 d-flex align-items-center" style="margin-top:3px"><label class="lab70 me-1" style="width:59px" for="ad">自适应模式:</label><select id="ad" class="sel" style="width:144px" disabled><option>关</option></select></div>
      </fieldset>
    </fieldset>
    <div class="d-flex justify-content-end" style="padding-top:13px;gap:7px"><button class="okbtn">确定</button><button class="okbtn sec">取消</button></div>
  </div>
</section>

<svg class="cursor" width="10" height="14"><path d="M1 0v12l3-2.500 2 4 2-1-2-4h3.500z" fill="#fff" stroke="#333" stroke-width=".500"/></svg>

<svg class="drivebadge" width="168" height="88">
  <defs><linearGradient id="mt" x2="0" y2="1"><stop stop-color="#3c3f3d"/><stop offset=".15" stop-color="#7b7f7d"/><stop offset=".45" stop-color="#b4b8b6"/><stop offset=".8" stop-color="#7d817f"/><stop offset="1" stop-color="#303331"/></linearGradient>
  <linearGradient id="sh"><stop stop-color="#111" stop-opacity=".45"/><stop offset=".35" stop-color="#111" stop-opacity="0"/><stop offset="1" stop-color="#111" stop-opacity=".2"/></linearGradient>
  <pattern id="cu" width="6" height="6" patternUnits="userSpaceOnUse" patternTransform="rotate(-35)"><path d="M0 0h6v6H0z" fill="#d98f6c"/><path d="M0 1h6" stroke="#8a3f24" stroke-width="1.500"/><path d="M0 4h6" stroke="#f3c0a0" stroke-width="1.500"/></pattern></defs>
  <path d="M43 28h125v46H43z" fill="url(#mt)"/><path d="M43 28h125v46H43z" fill="url(#sh)"/>
  <path d="M33 14C2 18-8 50 9 72" fill="none" stroke="#c9c6b6" stroke-width="2"/>
  <circle cx="43" cy="49" r="24" fill="#24211e" stroke="#b9b5a8" stroke-width="1.500"/><circle cx="43" cy="49" r="21" fill="url(#cu)"/>
  <text x="82" y="60" font-family="Open Sans" font-weight="700" font-size="25" fill="#2f3332">ProDrive</text>
  <circle cx="47" cy="13" r="8.500" fill="#a80d12"/><text x="47" y="17" text-anchor="middle" font-family="Liberation Sans" font-size="11" fill="#fff">M</text>
  <circle cx="15" cy="73" r="8.500" fill="#22b566"/><text x="15" y="77" text-anchor="middle" font-family="Liberation Sans" font-size="10" fill="#fff">V</text>
</svg>

<script>
// Each burst: t = [x, height] above the axis, b = below it, in wave pixels
const bursts = [
 {t:[[131,-3],[133,-14],[138,-32],[142,-47],[145,-60],[149,-61],[150,-69],[151,-56],[154,-56],[155,-72],[157,-72],[158,-59],[162,-57],[163,-50],[165,-33],[168,-20],[170,-2],[178,0]],b:[[133,4],[135,13],[141,36],[145,49],[150,55],[153,72],[155,83],[158,76],[160,84],[163,72],[165,35],[168,12],[171,2],[178,0]]},
 {t:[[200,0],[202,-10],[205,-27],[209,-31],[212,-42],[214,-40],[216,-26],[218,-13],[221,-7],[223,-38],[225,-69],[226,-30],[227,-65],[229,-62],[230,-24],[231,-56],[233,-24],[235,-57],[237,-40],[238,-56],[241,-50],[242,-24],[243,-49],[247,-47],[249,-29],[253,-22],[256,-9],[260,-2],[263,0]],b:[[200,1],[202,8],[206,27],[210,33],[212,48],[214,56],[216,25],[218,12],[221,8],[223,20],[225,35],[226,26],[235,27],[243,31],[248,28],[251,18],[255,8],[260,1]]},
 {t:[[289,-6],[293,-20],[296,-31],[299,-44],[301,-62],[303,-53],[305,-48],[306,-20],[308,-56],[310,-43],[318,-39],[323,-25],[327,-4],[330,-2],[335,0]],b:[[289,2],[292,11],[296,19],[300,32],[303,21],[307,34],[311,41],[316,53],[318,42],[323,29],[326,12],[329,3],[335,0]]},
 {t:[[371,-2],[373,-10],[377,-22],[381,-40],[392,-60],[399,-50],[404,-25],[407,-10],[410,-2],[415,0]],b:[[371,2],[373,10],[376,24],[381,41],[385,51],[391,59],[396,54],[401,38],[404,21],[407,6],[410,2]]},
 {t:[[437,-2],[439,-12],[442,-24],[448,-50],[457,-55],[466,-35],[470,-21],[473,-8],[480,-1]],b:[[437,2],[439,10],[442,28],[446,44],[450,57],[454,45],[457,40],[461,31],[466,18],[472,9],[477,4],[481,0]]},
 {t:[[501,-2],[503,-10],[506,-18],[508,-22],[513,-28],[524,-50],[537,-35],[542,-22],[546,-14],[548,-3],[553,0]],b:[[501,2],[503,9],[506,21],[511,18],[513,44],[515,9],[517,8],[518,54],[520,59],[525,54],[534,54],[538,44],[543,28],[546,11],[549,3]]},
 {t:[[571,-2],[572,-10],[577,-18],[582,-30],[600,-40],[611,-22],[617,-16],[619,-6],[622,-1]],b:[[571,2],[573,12],[577,28],[582,38],[586,48],[588,42],[591,31],[592,12],[594,28],[596,46],[600,45],[604,39],[611,28],[614,13],[618,6],[622,0]]},
 {t:[[666,-1],[667,-7],[669,-24],[673,-31],[676,-42],[679,-43],[680,-65],[681,-47],[683,-41],[686,-34],[688,-24],[691,-26],[695,-17],[697,-9],[700,-2],[706,0]],b:[[667,3],[670,15],[673,25],[678,28],[680,21],[683,27],[686,36],[689,44],[692,35],[695,16],[698,4],[700,1]]},
 {t:[[721,-1],[722,-7],[725,-14],[727,-19],[730,-28],[732,-40],[735,-51],[737,-39],[739,-34],[740,-20],[741,-34],[746,-29],[750,-23],[752,-15],[755,-4],[757,-1],[762,0]],b:[[722,3],[726,12],[730,22],[732,27],[738,27],[741,30],[742,6],[743,37],[746,36],[748,28],[751,16],[755,4],[757,1]]},
 {t:[[773,-1],[774,-6],[778,-16],[782,-28],[785,-35],[787,-44],[790,-43],[793,-31],[796,-35],[800,-29],[803,-15],[807,-9],[809,-3],[816,0]],b:[[774,3],[777,11],[781,20],[785,25],[791,27],[796,23],[801,35],[803,25],[806,11],[809,4],[811,0]]}
];
const lerp=(p,x)=>{if(x<=p[0][0])return x<p[0][0]?0:p[0][1];for(let i=1;i<p.length;i++)if(x<=p[i][0]){const[a,c]=p[i-1],[d,e]=p[i];return c+(e-c)*(x-a)/(d-a)}return 0};
let seed=7;const rnd=()=>(seed=(seed*16807)%2147483647)/2147483647;
function shape(cy,k,j,dx){let d='';for(const s of bursts){const x0=s.t[0][0],x1=s.t[s.t.length-1][0];
  for(let x=x0;x<=x1;x++){const a=lerp(s.t,x)*(1-j*rnd()),b=lerp(s.b,x)*(1-j*rnd());
    d+=`M${x+dx} ${(cy+a*k-.5).toFixed(1)}h1.2V${(cy+b*k+.5).toFixed(1)}h-1.2z`}}return d}
const H=177,cs=[177,531],dbs=[3,6,9,15,21],amp=n=>H*Math.pow(10,-n/20);
// main waveform
let w='';
for(let i=1;i<=12;i++)w+=`<path d="M${i*70-2} 0V708" stroke="#d3e0dc"/>`;
for(const c of cs)for(const n of dbs)for(const s of[-1,1])w+=`<path d="M0 ${Math.round(c+s*amp(n))-.5}H892" stroke="#d8e4e0"/>`;
w+='<path d="M0 353.500H892" stroke="#9a9f9e"/>';
for(const c of cs)w+=`<path d="M0 ${c-.5}H892" stroke="#5b6065"/><path d="${shape(c,1,.08,-1)}" fill="#264533"/>`;
document.getElementById('wave').innerHTML=w;
document.getElementById('ov').innerHTML=[5,19].map(c=>`<path d="M0 ${c-.5}H894" stroke="#6a6f6c"/><path d="${shape(c-.5,.036,.3,-4)}" fill="#35523f"/>`).join('');
// time ruler
const D=6.394;
let r='<text x="7" y="13" fill="#5f7a6b" font-size="11">hms</text>';
for(let i=0;i<64;i++)r+=`<rect x="${i*10/D}%" y="${i%5?19:16}" width="1" height="${i%5?4:7}" fill="#a9b8b0"/>`;
for(let i=1;i<=12;i++)r+=`<text x="${i*50/D}%" y="13" text-anchor="middle" fill="#96aa9e" font-size="11">${(i/2).toFixed(1)}</text>`;
document.getElementById('ruler').innerHTML=r;
// dB scale
let g='<rect x="0" y="0" width="100%" height="1" fill="#050705"/><rect x="0" y="50%" width="100%" height="2" fill="#0b0d0b"/>';
for(const c of cs){g+=`<text x="8" y="${(c-H+12)/7.08}%" fill="#8f918f" font-size="11">dB</text><text x="8" y="${(c+4)/7.08}%" fill="#8f918f" font-size="11">-∞</text>`;
  for(const s of[-1,1]){for(let n=1;n<22;n++)g+=`<rect x="1" y="${(c+s*amp(n)-1)/7.08}%" width="${dbs.includes(n)?4:2}" height="1" fill="#8f918f"/>`;
  for(const n of dbs)g+=`<text x="8" y="${(c+s*amp(n)+4)/7.08}%" fill="#8f918f" font-size="11">-${n}</text>`}}
document.getElementById('db').innerHTML=g;
// level scale
let l='';for(let i=0;i<=60;i++){const x=(.15+i*1.641);l+=`<rect x="${x}%" y="0" width="1" height="4" fill="#8f918f"/>`;
  if(i<60)for(let k=1;k<5;k++)l+=`<rect x="${x+k*.328}%" y="0" width="1" height="2" fill="#5f625f"/>`;
  l+=i?`<text x="${x}%" y="15" text-anchor="middle" fill="#8f918f" font-size="9">${i-60}</text>`:'<text x="0" y="15" fill="#8f918f" font-size="9">dB</text>'}
document.getElementById('lv').innerHTML=l;
// transport and zoom buttons
const F='fill="currentColor"',S='fill="none" stroke="currentColor" stroke-width="1.500"';
const tp=[['停止',`<path d="M3 3h9v10H3z" ${F}/>`],['播放',`<path d="M4 3l9 5-9 5z" ${F}/>`],['暂停',`<path d="M4 3h3v10H4zM9 3h3v10H9z" ${F}/>`],['上一个',`<path d="M3 3h2v10H3zM13 3v10L6 8z" ${F}/>`],['快退',`<path d="M7.500 4v8L0 8zM15.500 4v8L8 8z" ${F}/>`],['快进',`<path d="M.5 4v8L8 8zM8.500 4v8L16 8z" ${F}/>`],['下一个',`<path d="M3 3l7 5-7 5zM11 3h2v10h-2z" ${F}/>`],['录制','<circle cx="8" cy="8" r="4.500" fill="#5f1f20"/>'],['循环','<use href="#i-loop" x="1" y="2" width="14" height="12"/>'],['跳过',`<path d="M4 5L1 8l3 3M7 4v2M7 10v2M1 8h4M8 8h7M12 5l3 3-3 3" ${S}/>`]];
const U=(...a)=>a.map(i=>`<use href="#i-${i}" width="16" height="16"/>`).join('');
const zb=[['放大幅度',U('vbar','zin')],['缩小幅度',U('vbar','zout')],['放大时间','<g transform="translate(-1 2)">'+U('zin')+'</g>'+U('hbar')],['缩小时间','<g transform="translate(-1 2)">'+U('zout')+'</g>'+U('hbar')],['全部缩小',U('full')],['放大入点','<path d="M2 4l-3 4 3 4" fill="none" stroke="currentColor"/><g transform="translate(1 1)">'+U('zoom')+'</g>'],['放大出点','<path d="M0 4l3 4-3 4" fill="none" stroke="currentColor"/><g transform="translate(1 1)">'+U('zoom')+'</g>'],['缩放选区','<path d="M-1 4l-2 4 2 4M1 4l2 4-2 4" fill="none" stroke="currentColor"/><g transform="translate(1 1)">'+U('zoom')+'</g>'],['计时',`<circle cx="8" cy="9" r="5" fill="none" stroke="currentColor"/><path d="M8 9V4l4 2M2 2h4v4M8 1h3" ${S}/>`],['缩放复位',U('vbar','zin')]];
const mk=a=>a.map(([n,p])=>`<button class="ib cell28" aria-label="${n}"><svg width="16" height="16" viewBox="0 0 16 16" overflow="visible">${p}</svg></button>`).join('');
document.getElementById('tp').innerHTML=mk(tp);document.getElementById('zb').innerHTML=mk(zb);
</script>
</body>
</html>
